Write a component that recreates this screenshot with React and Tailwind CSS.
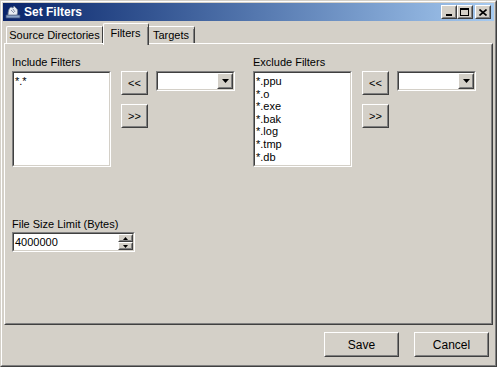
import React from 'react';

const Raised = ({ className = '', children }) => (
  <div className={`border border-t-white border-l-white border-r-[#404040] border-b-[#404040] bg-[#d4d0c8] ${className}`}>
    <div className="w-full h-full border border-t-[#d4d0c8] border-l-[#d4d0c8] border-r-[#808080] border-b-[#808080] flex items-center justify-center">
      {children}
    </div>
  </div>
);

const Sunken = ({ className = '', inner = '', children }) => (
  <div className={`border border-t-[#808080] border-l-[#808080] border-r-white border-b-white ${className}`}>
    <div className={`w-full h-full border border-t-[#404040] border-l-[#404040] border-r-[#d4d0c8] border-b-[#d4d0c8] bg-white ${inner}`}>
      {children}
    </div>
  </div>
);

const Combo = () => (
  <Sunken className="w-[79px] h-[20px] ml-[8px]" inner="flex justify-end">
    <Raised className="w-[16px] h-[16px]">
      <svg width="7" height="4" viewBox="0 0 7 4">
        <path d="M0 0h7L3.5 4z" fill="#000" />
      </svg>
    </Raised>
  </Sunken>
);

const FilterGroup = ({ label, items, width }) => (
  <div className={`flex flex-col ${width}`}>
    <div className="h-[13px] leading-[13px]">{label}</div>
    <div className="flex mt-[2px]">
      <Sunken className="w-[99px] h-[96px]" inner="pl-[1px] pt-[2px]">
        {items.map((it) => (
          <div key={it} className="leading-[12.6px]">{it}</div>
        ))}
      </Sunken>
      <div className="flex flex-col ml-[10px] gap-[9px]">
        <Raised className="w-[27px] h-[24px]">&lt;&lt;</Raised>
        <Raised className="w-[27px] h-[24px]">&gt;&gt;</Raised>
      </div>
      <Combo />
    </div>
  </div>
);

const TitleButton = ({ children, className = '' }) => (
  <Raised className={`w-[16px] h-[14px] ${className}`}>{children}</Raised>
);

export default function App() {
  return (
    <div className="w-[497px] h-[367px] bg-[#d4d0c8] text-[11px] text-black font-['Liberation_Sans',Arial,sans-serif] border border-t-[#d4d0c8] border-l-[#d4d0c8] border-r-[#404040] border-b-[#404040]">
      <div className="h-full border border-t-white border-l-white border-r-[#808080] border-b-[#808080] p-[1px] flex flex-col">
        {/* title bar */}
        <div className="h-[18px] flex items-center bg-gradient-to-r from-[#0a246a] to-[#a6caf0] pl-[2px] pr-[3px]">
          <svg width="16" height="16" viewBox="0 0 16 16">
            <path d="M1 14h14v-3H1z" fill="#8aa4c8" stroke="#3c4f78" strokeWidth="0.8" />
            <path d="M3 11c0-4 1-7 3-8l2 1 1-2 2 2c2 1 2 4 1 7z" fill="#e8ecf2" stroke="#6b7890" strokeWidth="0.8" />
            <path d="M6 6l3 3M8 5l2 3" stroke="#6b7890" strokeWidth="0.8" />
          </svg>
          <span className="ml-[3px] text-white font-bold text-[12px] leading-[18px]">Set Filters</span>
          <div className="ml-auto flex">
            <TitleButton>
              <div className="w-[6px] h-[2px] bg-black mt-[6px] -ml-[1px]" />
            </TitleButton>
            <TitleButton>
              <div className="w-[9px] h-[8px] border border-black border-t-2 -ml-[1px]" />
            </TitleButton>
            <TitleButton className="ml-[2px]">
              <svg width="8" height="7" viewBox="0 0 8 7" className="-ml-[1px]">
                <path d="M0.5 0.5l7 6M7.5 0.5l-7 6" stroke="#000" strokeWidth="1.6" />
              </svg>
            </TitleButton>
          </div>
        </div>

        <div className="px-[1px] flex flex-col">
          {/* tabs */}
          <div className="h-[22px] flex items-end pl-[2px]">
            <div className="w-[97px] h-[17px] pt-[2px] text-center leading-[13px] border-t border-l border-r border-t-white border-l-white border-r-[#404040] rounded-tl-[2px]">
              Source Directories
            </div>
            <div className="relative top-[2px] z-10 w-[46px] h-[22px] pt-[3px] text-center leading-[13px] bg-[#d4d0c8] border-t border-l border-r border-t-white border-l-white border-r-[#404040] rounded-t-[2px]">
              <div className="h-full border-r border-r-[#808080]">Filters</div>
            </div>
            <div className="w-[46px] h-[17px] pt-[2px] text-center leading-[13px] border-t border-r border-t-white border-r-[#404040] rounded-tr-[2px]">
              <div className="h-full border-r border-r-[#808080]">Targets</div>
            </div>
          </div>

          {/* panel */}
          <div className="h-[282px] border border-t-white border-l-white border-r-[#404040] border-b-[#404040]">
            <div className="h-full border border-t-[#d4d0c8] border-l-[#d4d0c8] border-r-[#808080] border-b-[#808080] pl-[6px] pt-[11px] flex flex-col">
              <div className="flex">
                <FilterGroup label="Include Filters" items={['*.*']} width="w-[241px]" />
                <FilterGroup
                  label="Exclude Filters"
                  items={['*.ppu', '*.o', '*.exe', '*.bak', '*.log', '*.tmp', '*.db']}
                  width="w-[230px]"
                />
              </div>

              <div className="mt-[51px] h-[13px] leading-[13px]">File Size Limit (Bytes)</div>
              <Sunken className="w-[123px] h-[20px] mt-[1px]" inner="flex items-stretch">
                <div className="flex-1 pl-[1px] leading-[16px]">4000000</div>
                <div className="flex flex-col w-[15px]">
                  <Raised className="h-[8px]">
                    <svg width="5" height="3" viewBox="0 0 5 3">
                      <path d="M0 3h5L2.5 0z" fill="#000" />
                    </svg>
                  </Raised>
                  <Raised className="h-[8px]">
                    <svg width="5" height="3" viewBox="0 0 5 3">
                      <path d="M0 0h5L2.5 3z" fill="#000" />
                    </svg>
                  </Raised>
                </div>
              </Sunken>
            </div>
          </div>

          {/* buttons */}
          <div className="flex justify-end gap-[15px] pt-[7px] pr-[4px]">
            <Raised className="w-[75px] h-[25px] text-[12px]">Save</Raised>
            <Raised className="w-[75px] h-[25px] text-[12px]">Cancel</Raised>
          </div>
        </div>
      </div>
    </div>
  );
}
